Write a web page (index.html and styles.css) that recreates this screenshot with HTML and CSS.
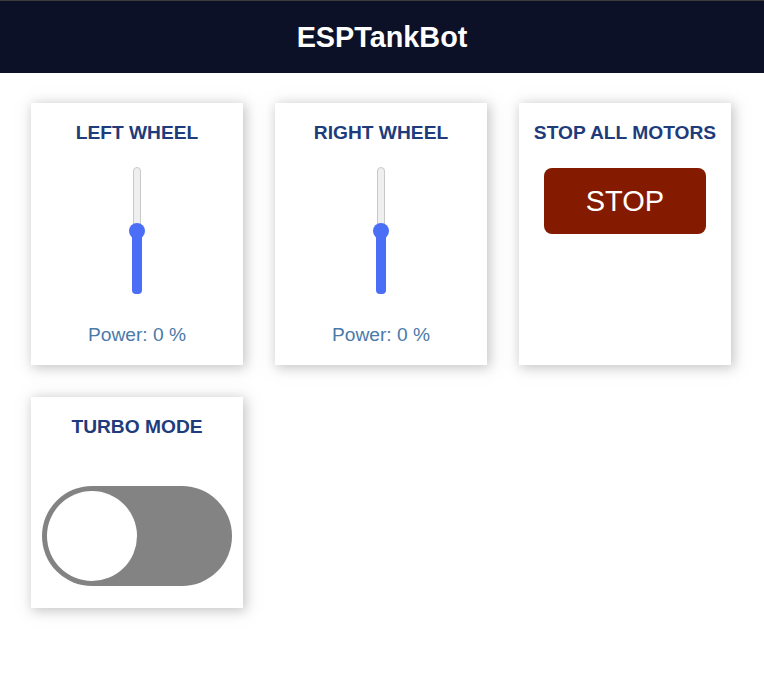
FILE: index.html
```html
<!DOCTYPE html>
<html lang="en">
<head>
<meta charset="utf-8">
<title>ESPTankBot</title>
<link rel="stylesheet" href="styles.css">
</head>
<body>
<header class="topnav">
  <h1>ESPTankBot</h1>
</header>
<main class="content">
  <div class="cards">
    <section class="card">
      <p class="card-title">LEFT WHEEL</p>
      <div class="vslider">
        <div class="vslider-fill"></div>
        <div class="vslider-thumb"></div>
      </div>
      <p class="power">Power: 0 %</p>
    </section>
    <section class="card">
      <p class="card-title">RIGHT WHEEL</p>
      <div class="vslider">
        <div class="vslider-fill"></div>
        <div class="vslider-thumb"></div>
      </div>
      <p class="power">Power: 0 %</p>
    </section>
    <section class="card">
      <p class="card-title">STOP ALL MOTORS</p>
      <button class="stop-btn">STOP</button>
    </section>
    <section class="card">
      <p class="card-title">TURBO MODE</p>
      <div class="switch"><span class="knob"></span></div>
    </section>
  </div>
</main>
</body>
</html>
```

FILE: styles.css
```css
html, body {
  margin: 0;
  padding: 0;
  background: #ffffff;
  font-family: "Liberation Sans", Arial, sans-serif;
}

.topnav {
  background: #0c1127;
  border-top: 1px solid #3c3c3c;
  height: 72px;
  display: flex;
  align-items: center;
  justify-content: center;
}

.topnav h1 {
  margin: 0;
  color: #ffffff;
  font-size: 28.8px;
  font-weight: bold;
  line-height: 32px;
}

.content {
  padding: 30px 2px 30px 0;
}

.cards {
  max-width: 700px;
  margin: 0 auto;
  display: grid;
  grid-template-columns: repeat(3, 1fr);
  gap: 32px;
}

.card {
  background: #ffffff;
  box-shadow: 2px 2px 12px 1px rgba(140, 140, 140, 0.5);
  display: flex;
  flex-direction: column;
  align-items: center;
}

.card-title {
  margin: 19px 0;
  font-size: 19.2px;
  line-height: 22px;
  font-weight: bold;
  color: #1e3c7b;
  text-align: center;
}

.vslider {
  position: relative;
  width: 6px;
  height: 125px;
  margin: 4px 0 11px;
  background: #efefef;
  border: 1px solid #c9c9c9;
  border-radius: 4px;
}

.vslider-fill {
  position: absolute;
  left: -2px;
  right: -2px;
  top: 63px;
  bottom: -1px;
  background: #4a6ef6;
  border-radius: 4px;
}

.vslider-thumb {
  position: absolute;
  left: 50%;
  top: 63px;
  width: 16px;
  height: 16px;
  margin: -8px 0 0 -8px;
  background: #4a6ef6;
  border-radius: 50%;
}

.power {
  margin: 19px 0;
  font-size: 19.2px;
  line-height: 22px;
  color: #4a7aa9;
  text-align: center;
}

.stop-btn {
  margin-top: 5px;
  width: 162px;
  height: 66px;
  border: none;
  border-radius: 8px;
  background: #841b00;
  color: #ffffff;
  font-family: "Liberation Sans", Arial, sans-serif;
  font-size: 29px;
  padding: 0;
  cursor: pointer;
}

.switch {
  position: relative;
  margin: 29px 0 22px;
  width: 190px;
  height: 100px;
  border-radius: 50px;
  background: #838383;
}

.knob {
  position: absolute;
  left: 5px;
  top: 5px;
  width: 90px;
  height: 90px;
  border-radius: 50%;
  background: #ffffff;
}
```
